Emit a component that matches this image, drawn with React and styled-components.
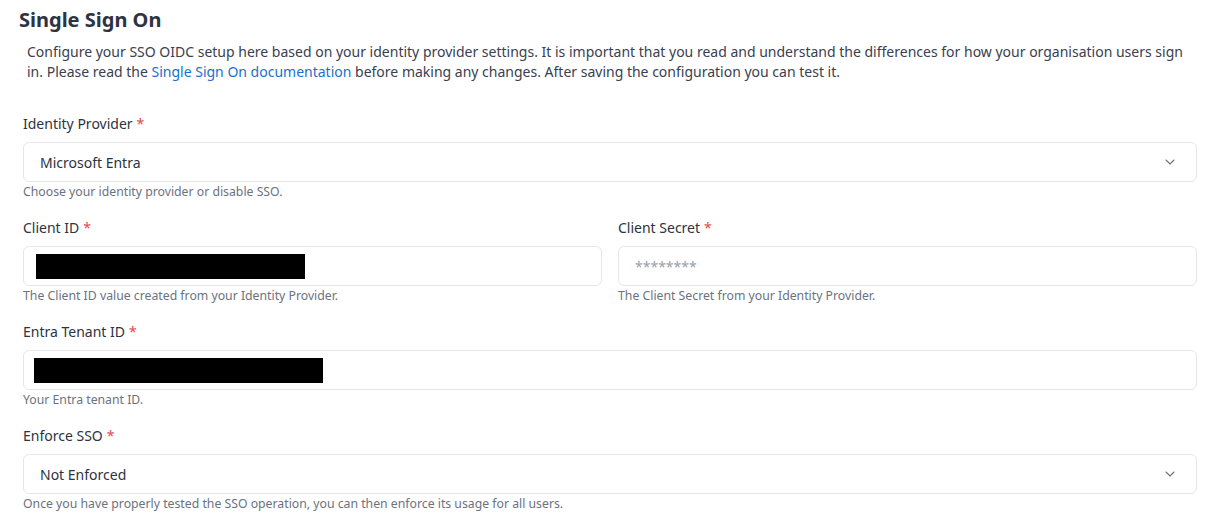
import React from 'react';
import styled, { createGlobalStyle } from 'styled-components';

const GlobalStyle = createGlobalStyle`
  body {
    margin: 0;
    background: #ffffff;
    font-family: "Noto Sans", "Open Sans", sans-serif;
    color: #2d3340;
  }
`;

const Page = styled.div`
  padding: 6px 13px 0 19px;
`;

const Title = styled.h2`
  margin: 0;
  font-size: 20px;
  line-height: 28px;
  font-weight: 700;
  color: #2d3340;
`;

const Intro = styled.p`
  margin: 8px 0 0;
  padding-left: 8px;
  font-size: 14px;
  line-height: 20px;
  color: #3a4050;
`;

const DocLink = styled.a`
  color: #1a6fd1;
  text-decoration: none;
`;

const Form = styled.div`
  margin-top: 32px;
  padding-left: 4px;
  display: flex;
  flex-direction: column;
  gap: 18px;
`;

const Row = styled.div`
  display: grid;
  grid-template-columns: 1fr 1fr;
  gap: 16px;
`;

const Field = styled.div`
  display: flex;
  flex-direction: column;
  min-width: 0;
`;

const Label = styled.label`
  font-size: 14px;
  line-height: 20px;
  color: #2d3340;
  margin-bottom: 8px;
`;

const Required = styled.span`
  color: #e5484d;
  margin-left: 4px;
`;

const Box = styled.div`
  height: 40px;
  box-sizing: border-box;
  border: 1px solid #e4e6ea;
  border-radius: 6px;
  background: #fff;
  display: flex;
  align-items: center;
  padding: ${p => p.$pad || '0 12px'};
  font-size: 14px;
  color: #2d3340;
`;

const Value = styled.span`
  flex: 1;
`;

const Placeholder = styled.span`
  color: #9aa0aa;
  padding-left: 4px;
`;

const Redacted = styled.div`
  height: 25px;
  width: ${p => p.$w}px;
  background: #000;
`;

const Help = styled.div`
  margin-top: 2px;
  font-size: 12.25px;
  line-height: 16px;
  color: #6b7280;
`;

const Chevron = () => (
  <svg width="16" height="16" viewBox="0 0 24 24" fill="none" stroke="#6b7280" strokeWidth="1.6" strokeLinecap="round" strokeLinejoin="round">
    <path d="m6 9 6 6 6-6" />
  </svg>
);

const Select = ({ value }) => (
  <Box $pad="0 18px 0 16px">
    <Value>{value}</Value>
    <Chevron />
  </Box>
);

export default function App() {
  return (
    <Page>
      <GlobalStyle />
      <Title>Single Sign On</Title>
      <Intro>
        Configure your SSO OIDC setup here based on your identity provider settings. It is important that you read and understand the differences for how your organisation users sign in. Please read the{' '}
        <DocLink href="#">Single Sign On documentation</DocLink> before making any changes. After saving the configuration you can test it.
      </Intro>
      <Form>
        <Field>
          <Label>Identity Provider<Required>*</Required></Label>
          <Select value="Microsoft Entra" />
          <Help>Choose your identity provider or disable SSO.</Help>
        </Field>
        <Row>
          <Field>
            <Label>Client ID<Required>*</Required></Label>
            <Box><Redacted $w={269} /></Box>
            <Help>The Client ID value created from your Identity Provider.</Help>
          </Field>
          <Field>
            <Label>Client Secret<Required>*</Required></Label>
            <Box><Placeholder>********</Placeholder></Box>
            <Help>The Client Secret from your Identity Provider.</Help>
          </Field>
        </Row>
        <Field>
          <Label>Entra Tenant ID<Required>*</Required></Label>
          <Box $pad="0 10px"><Redacted $w={289} /></Box>
          <Help>Your Entra tenant ID.</Help>
        </Field>
        <Field>
          <Label>Enforce SSO<Required>*</Required></Label>
          <Select value="Not Enforced" />
          <Help>Once you have properly tested the SSO operation, you can then enforce its usage for all users.</Help>
        </Field>
      </Form>
    </Page>
  );
}
